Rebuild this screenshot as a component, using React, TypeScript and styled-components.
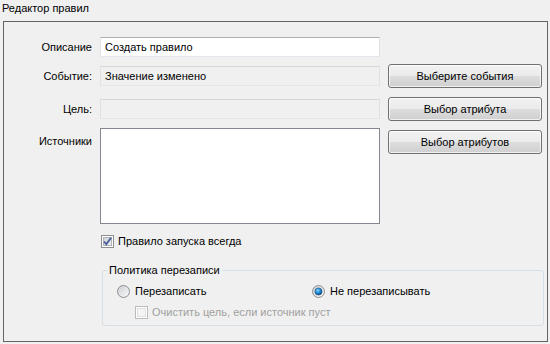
import React from "react"
import styled, {createGlobalStyle} from "styled-components"

const GlobalStyle = createGlobalStyle`
  body {
    margin: 0;
    background: #f0f0f0;
    font-family: "Liberation Sans", Arial, sans-serif;
    font-size: 11px;
    color: #000;
  }
`

const Window = styled.div`
  width: 550px;
  height: 344px;
  box-sizing: border-box;
  background: #f0f0f0;
`
const Title = styled.div`
  height: 21px;
  line-height: 16px;
  padding-left: 2px;
`
const Panel = styled.div`
  margin: 0 2px 0 3px;
  height: 321px;
  box-sizing: border-box;
  border: 1px solid #646464;
  padding: 15px 4px 0 4px;
  display: flex;
  flex-direction: column;
`
const Row = styled.div<{$top: number; $height: number; $align?: string}>`
  display: flex;
  align-items: ${(p) => p.$align || "center"};
  column-gap: 8px;
  margin-top: ${(p) => p.$top}px;
  height: ${(p) => p.$height}px;
`
const Label = styled.div<{$padTop?: number}>`
  width: 84px;
  flex: none;
  text-align: right;
  padding-top: ${(p) => p.$padTop || 0}px;
`
const Field = styled.div<{$readOnly?: boolean}>`
  width: 280px;
  height: 20px;
  box-sizing: border-box;
  flex: none;
  padding: 0 4px;
  line-height: 18px;
  background: ${(p) => (p.$readOnly ? "#f0f0f0" : "#fff")};
  border: 1px solid;
  border-color: ${(p) =>
    p.$readOnly ? "#d6d6d6 #e0e0e0 #e6e6e6 #e0e0e0" : "#abadb3 #dbdfe6 #e3e9ef #e2e3ea"};
`
const TextArea = styled.div`
  width: 280px;
  height: 96px;
  box-sizing: border-box;
  flex: none;
  background: #fff;
  border: 1px solid #828790;
`
const Button = styled.div<{$top?: number}>`
  width: 154px;
  height: 24px;
  box-sizing: border-box;
  flex: none;
  margin-top: ${(p) => p.$top || 0}px;
  border: 1px solid #707070;
  border-radius: 3px;
  background: linear-gradient(#f2f2f2 0%, #ebebeb 50%, #dddddd 51%, #cfcfcf 100%);
  box-shadow: inset 0 0 0 1px rgba(255, 255, 255, 0.7);
  display: flex;
  align-items: center;
  justify-content: center;
`
const CheckRow = styled.label<{$top: number; $indent: number; $disabled?: boolean}>`
  display: flex;
  align-items: center;
  gap: 4px;
  height: 16px;
  margin-top: ${(p) => p.$top}px;
  margin-left: ${(p) => p.$indent}px;
  color: ${(p) => (p.$disabled ? "#a0a0a0" : "#000")};
`
const Group = styled.fieldset`
  margin: 15px 0 0 94px;
  width: 442px;
  box-sizing: border-box;
  padding: 0 0 5px 0;
  border: 1px solid #d5dfe5;
  border-radius: 3px;
`
const Legend = styled.legend`
  margin-left: 4px;
  padding: 0 2px;
  line-height: 13px;
`
const GroupBody = styled.div`
  padding-left: 14px;
  display: flex;
  flex-direction: column;
`
const RadioLine = styled.div`
  display: grid;
  grid-template-columns: 195px 1fr;
  margin-top: 6px;
`
const RadioItem = styled.label`
  display: flex;
  align-items: center;
  gap: 5px;
  height: 16px;
`

const CheckBox = ({checked, disabled}: {checked?: boolean; disabled?: boolean}) => (
  <svg width="13" height="13" viewBox="0 0 13 13">
    <defs>
      <linearGradient id="cbg" x1="0" y1="0" x2="1" y2="1">
        <stop offset="0" stopColor="#cbcfd5" />
        <stop offset="1" stopColor="#f6f6f6" />
      </linearGradient>
    </defs>
    <rect x="0.5" y="0.5" width="12" height="12" fill="#fff" stroke={disabled ? "#bcbcbc" : "#8e8f8f"} />
    <rect x="2.5" y="2.5" width="8" height="8" fill={disabled ? "#f4f4f4" : "url(#cbg)"} stroke={disabled ? "#e0e0e0" : "#b0b4ba"} />
    {checked && (
      <path d="M3 6.5 L5.3 9.3 L10 2.8" fill="none" stroke="#4a5f97" strokeWidth="1.9" />
    )}
  </svg>
)

const Radio = ({checked}: {checked?: boolean}) => (
  <svg width="13" height="13" viewBox="0 0 13 13">
    <defs>
      <linearGradient id="rbg" x1="0" y1="0" x2="1" y2="1">
        <stop offset="0" stopColor="#c9cdd2" />
        <stop offset="1" stopColor="#fbfbfb" />
      </linearGradient>
      <radialGradient id="rdot" cx="0.4" cy="0.35" r="0.7">
        <stop offset="0" stopColor="#8ad9ff" />
        <stop offset="0.5" stopColor="#1c8bd6" />
        <stop offset="1" stopColor="#0b3f7a" />
      </radialGradient>
    </defs>
    <circle cx="6.5" cy="6.5" r="6" fill="url(#rbg)" stroke="#8e8f8f" />
    {checked && <circle cx="6.5" cy="6.5" r="3.6" fill="url(#rdot)" stroke="#274c73" strokeWidth="0.6" />}
  </svg>
)

export default function App() {
  return (
    <Window>
      <GlobalStyle />
      <Title>Редактор правил</Title>
      <Panel>
        <Row $top={0} $height={20}>
          <Label>Описание</Label>
          <Field>Создать правило</Field>
        </Row>
        <Row $top={7} $height={24}>
          <Label>Событие:</Label>
          <Field $readOnly>Значение изменено</Field>
          <Button>Выберите события</Button>
        </Row>
        <Row $top={9} $height={24}>
          <Label>Цель:</Label>
          <Field $readOnly />
          <Button>Выбор атрибута</Button>
        </Row>
        <Row $top={7} $height={96} $align="flex-start">
          <Label $padTop={7}>Источники</Label>
          <TextArea />
          <Button $top={2}>Выбор атрибутов</Button>
        </Row>
        <CheckRow $top={9} $indent={93}>
          <CheckBox checked />
          Правило запуска всегда
        </CheckRow>
        <Group>
          <Legend>Политика перезаписи</Legend>
          <GroupBody>
            <RadioLine>
              <RadioItem>
                <Radio />
                Перезаписать
              </RadioItem>
              <RadioItem>
                <Radio checked />
                Не перезаписывать
              </RadioItem>
            </RadioLine>
            <CheckRow $top={5} $indent={18} $disabled>
              <CheckBox disabled />
              Очистить цель, если источник пуст
            </CheckRow>
          </GroupBody>
        </Group>
      </Panel>
    </Window>
  )
}
